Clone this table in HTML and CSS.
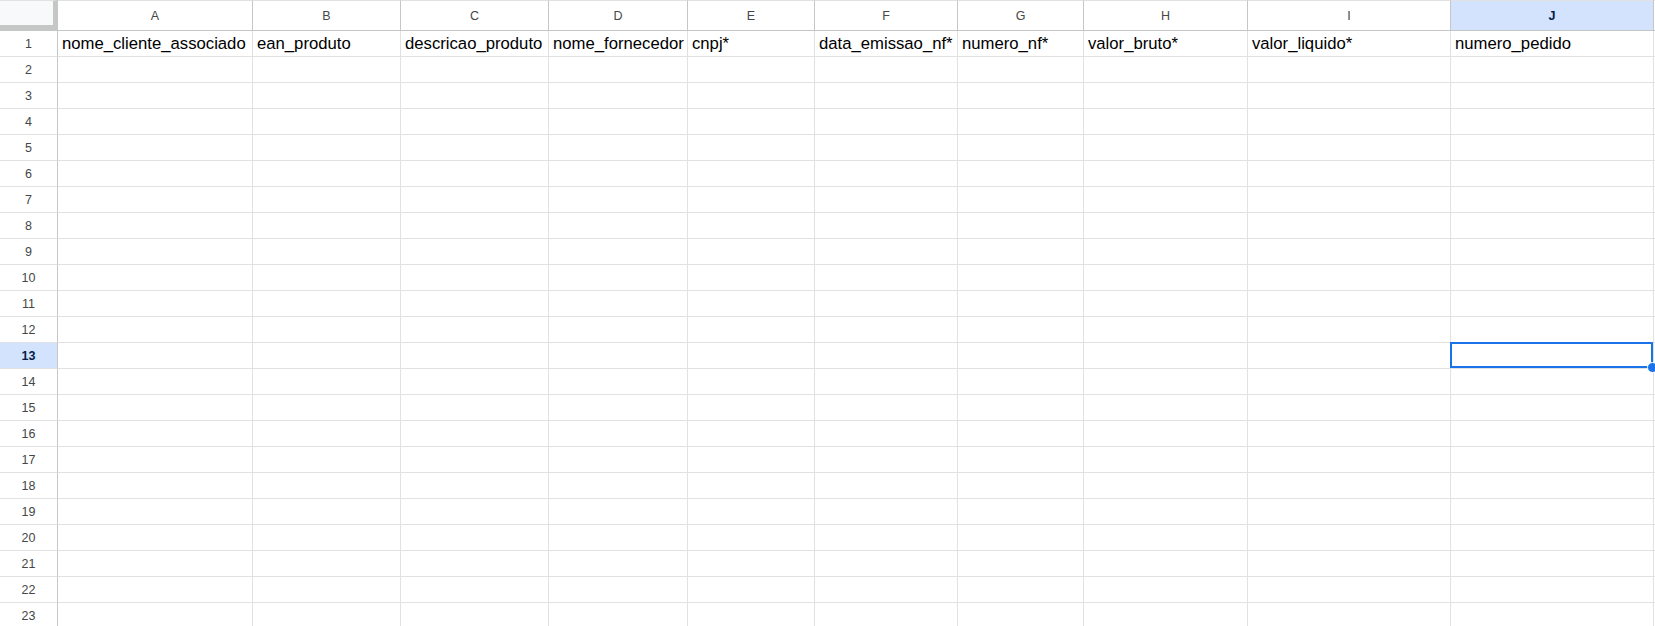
FILE: index.html
```html
<!DOCTYPE html>
<html lang="pt-BR">

<head>
  <meta charset="UTF-8" />
  <meta name="viewport" content="width=device-width, initial-scale=1.0" />
  <title>Planilha</title>
  <link rel="stylesheet" href="styles.css">
</head>

<body>
  <div class="sheet">
    <div class="row head">
      <div class="corner"></div>
      <div class="col-h">A</div>
      <div class="col-h">B</div>
      <div class="col-h">C</div>
      <div class="col-h">D</div>
      <div class="col-h">E</div>
      <div class="col-h">F</div>
      <div class="col-h">G</div>
      <div class="col-h">H</div>
      <div class="col-h">I</div>
      <div class="col-h active">J</div>
      <div class="col-h"></div>
    </div>

    <div class="row">
      <div class="row-h">1</div>
      <div class="cell">nome_cliente_associado</div>
      <div class="cell">ean_produto</div>
      <div class="cell">descricao_produto</div>
      <div class="cell">nome_fornecedor</div>
      <div class="cell">cnpj*</div>
      <div class="cell">data_emissao_nf*</div>
      <div class="cell">numero_nf*</div>
      <div class="cell">valor_bruto*</div>
      <div class="cell">valor_liquido*</div>
      <div class="cell">numero_pedido</div>
      <div class="cell"></div>
    </div>

    <div class="row"><div class="row-h">2</div><div class="cell"></div><div class="cell"></div><div class="cell"></div><div class="cell"></div><div class="cell"></div><div class="cell"></div><div class="cell"></div><div class="cell"></div><div class="cell"></div><div class="cell"></div><div class="cell"></div></div>
    <div class="row"><div class="row-h">3</div><div class="cell"></div><div class="cell"></div><div class="cell"></div><div class="cell"></div><div class="cell"></div><div class="cell"></div><div class="cell"></div><div class="cell"></div><div class="cell"></div><div class="cell"></div><div class="cell"></div></div>
    <div class="row"><div class="row-h">4</div><div class="cell"></div><div class="cell"></div><div class="cell"></div><div class="cell"></div><div class="cell"></div><div class="cell"></div><div class="cell"></div><div class="cell"></div><div class="cell"></div><div class="cell"></div><div class="cell"></div></div>
    <div class="row"><div class="row-h">5</div><div class="cell"></div><div class="cell"></div><div class="cell"></div><div class="cell"></div><div class="cell"></div><div class="cell"></div><div class="cell"></div><div class="cell"></div><div class="cell"></div><div class="cell"></div><div class="cell"></div></div>
    <div class="row"><div class="row-h">6</div><div class="cell"></div><div class="cell"></div><div class="cell"></div><div class="cell"></div><div class="cell"></div><div class="cell"></div><div class="cell"></div><div class="cell"></div><div class="cell"></div><div class="cell"></div><div class="cell"></div></div>
    <div class="row"><div class="row-h">7</div><div class="cell"></div><div class="cell"></div><div class="cell"></div><div class="cell"></div><div class="cell"></div><div class="cell"></div><div class="cell"></div><div class="cell"></div><div class="cell"></div><div class="cell"></div><div class="cell"></div></div>
    <div class="row"><div class="row-h">8</div><div class="cell"></div><div class="cell"></div><div class="cell"></div><div class="cell"></div><div class="cell"></div><div class="cell"></div><div class="cell"></div><div class="cell"></div><div class="cell"></div><div class="cell"></div><div class="cell"></div></div>
    <div class="row"><div class="row-h">9</div><div class="cell"></div><div class="cell"></div><div class="cell"></div><div class="cell"></div><div class="cell"></div><div class="cell"></div><div class="cell"></div><div class="cell"></div><div class="cell"></div><div class="cell"></div><div class="cell"></div></div>
    <div class="row"><div class="row-h">10</div><div class="cell"></div><div class="cell"></div><div class="cell"></div><div class="cell"></div><div class="cell"></div><div class="cell"></div><div class="cell"></div><div class="cell"></div><div class="cell"></div><div class="cell"></div><div class="cell"></div></div>
    <div class="row"><div class="row-h">11</div><div class="cell"></div><div class="cell"></div><div class="cell"></div><div class="cell"></div><div class="cell"></div><div class="cell"></div><div class="cell"></div><div class="cell"></div><div class="cell"></div><div class="cell"></div><div class="cell"></div></div>
    <div class="row"><div class="row-h">12</div><div class="cell"></div><div class="cell"></div><div class="cell"></div><div class="cell"></div><div class="cell"></div><div class="cell"></div><div class="cell"></div><div class="cell"></div><div class="cell"></div><div class="cell"></div><div class="cell"></div></div>
    <div class="row"><div class="row-h active">13</div><div class="cell"></div><div class="cell"></div><div class="cell"></div><div class="cell"></div><div class="cell"></div><div class="cell"></div><div class="cell"></div><div class="cell"></div><div class="cell"></div><div class="cell selected"><span class="handle"></span></div><div class="cell"></div></div>
    <div class="row"><div class="row-h">14</div><div class="cell"></div><div class="cell"></div><div class="cell"></div><div class="cell"></div><div class="cell"></div><div class="cell"></div><div class="cell"></div><div class="cell"></div><div class="cell"></div><div class="cell"></div><div class="cell"></div></div>
    <div class="row"><div class="row-h">15</div><div class="cell"></div><div class="cell"></div><div class="cell"></div><div class="cell"></div><div class="cell"></div><div class="cell"></div><div class="cell"></div><div class="cell"></div><div class="cell"></div><div class="cell"></div><div class="cell"></div></div>
    <div class="row"><div class="row-h">16</div><div class="cell"></div><div class="cell"></div><div class="cell"></div><div class="cell"></div><div class="cell"></div><div class="cell"></div><div class="cell"></div><div class="cell"></div><div class="cell"></div><div class="cell"></div><div class="cell"></div></div>
    <div class="row"><div class="row-h">17</div><div class="cell"></div><div class="cell"></div><div class="cell"></div><div class="cell"></div><div class="cell"></div><div class="cell"></div><div class="cell"></div><div class="cell"></div><div class="cell"></div><div class="cell"></div><div class="cell"></div></div>
    <div class="row"><div class="row-h">18</div><div class="cell"></div><div class="cell"></div><div class="cell"></div><div class="cell"></div><div class="cell"></div><div class="cell"></div><div class="cell"></div><div class="cell"></div><div class="cell"></div><div class="cell"></div><div class="cell"></div></div>
    <div class="row"><div class="row-h">19</div><div class="cell"></div><div class="cell"></div><div class="cell"></div><div class="cell"></div><div class="cell"></div><div class="cell"></div><div class="cell"></div><div class="cell"></div><div class="cell"></div><div class="cell"></div><div class="cell"></div></div>
    <div class="row"><div class="row-h">20</div><div class="cell"></div><div class="cell"></div><div class="cell"></div><div class="cell"></div><div class="cell"></div><div class="cell"></div><div class="cell"></div><div class="cell"></div><div class="cell"></div><div class="cell"></div><div class="cell"></div></div>
    <div class="row"><div class="row-h">21</div><div class="cell"></div><div class="cell"></div><div class="cell"></div><div class="cell"></div><div class="cell"></div><div class="cell"></div><div class="cell"></div><div class="cell"></div><div class="cell"></div><div class="cell"></div><div class="cell"></div></div>
    <div class="row"><div class="row-h">22</div><div class="cell"></div><div class="cell"></div><div class="cell"></div><div class="cell"></div><div class="cell"></div><div class="cell"></div><div class="cell"></div><div class="cell"></div><div class="cell"></div><div class="cell"></div><div class="cell"></div></div>
    <div class="row"><div class="row-h">23</div><div class="cell"></div><div class="cell"></div><div class="cell"></div><div class="cell"></div><div class="cell"></div><div class="cell"></div><div class="cell"></div><div class="cell"></div><div class="cell"></div><div class="cell"></div><div class="cell"></div></div>
  </div>
</body>

</html>
```

FILE: styles.css
```css
body {
  margin: 0;
  font-family: "Liberation Sans", Arial, sans-serif;
  background: white;
  overflow: hidden;
  height: 100vh;
}

.sheet {
  width: 1800px;
}

.row {
  display: grid;
  grid-template-columns: 58px 195px 148px 148px 139px 127px 143px 126px 164px 203px 203px 200px;
  height: 26px;
}

.row.head {
  height: 31px;
}

.row > div {
  box-sizing: border-box;
  border-right: 1px solid #e1e1e1;
  border-bottom: 1px solid #e1e1e1;
}

.corner {
  background: #f8f9fa;
  border-right: 5px solid #c4c7c5 !important;
  border-bottom: 6px solid #c4c7c5 !important;
  border-top: 1px solid #e1e1e1;
}

.col-h {
  display: flex;
  align-items: center;
  justify-content: center;
  background: white;
  color: #444746;
  font-size: 12.5px;
  border-top: 1px solid #e1e1e1;
  border-right-color: #c4c7c5 !important;
  border-bottom-color: #c4c7c5 !important;
}

.row-h {
  display: flex;
  align-items: center;
  justify-content: center;
  background: white;
  color: #444746;
  font-size: 12.5px;
  border-right-color: #c4c7c5 !important;
}

.col-h.active,
.row-h.active {
  background: #d3e3fd;
  color: #041e49;
  font-weight: bold;
}

.cell {
  display: flex;
  align-items: flex-end;
  padding: 0 3px 2px 4px;
  font-size: 16.7px;
  color: #000;
  white-space: nowrap;
  overflow: hidden;
}

.cell.selected {
  position: relative;
  overflow: visible;
}

.cell.selected::after {
  content: "";
  position: absolute;
  left: -1px;
  top: -1px;
  right: 0;
  bottom: 0;
  border: 2px solid #1a73e8;
}

.handle {
  position: absolute;
  right: -5px;
  bottom: -5px;
  width: 9px;
  height: 9px;
  border-radius: 50%;
  background: #1a73e8;
  border: 1px solid white;
  z-index: 2;
}
```
